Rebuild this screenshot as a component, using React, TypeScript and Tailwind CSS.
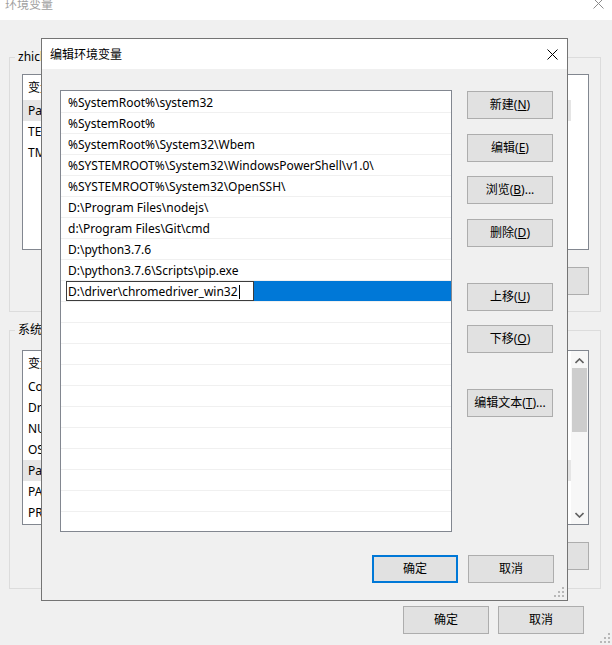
import React from 'react';
import clsx from 'clsx';

const paths = [
  '%SystemRoot%\\system32',
  '%SystemRoot%',
  '%SystemRoot%\\System32\\Wbem',
  '%SYSTEMROOT%\\System32\\WindowsPowerShell\\v1.0\\',
  '%SYSTEMROOT%\\System32\\OpenSSH\\',
  'D:\\Program Files\\nodejs\\',
  'd:\\Program Files\\Git\\cmd',
  'D:\\python3.7.6',
  'D:\\python3.7.6\\Scripts\\pip.exe',
];

const userVars = [
  { name: 'Path', value: 'C:\\Users\\zhichao\\AppData\\Local\\Microsoft\\WindowsApps;', selected: true },
  { name: 'TEMP', value: '%USERPROFILE%\\AppData\\Local\\Temp' },
  { name: 'TMP', value: '%USERPROFILE%\\AppData\\Local\\Temp' },
];

const sysVars = [
  { name: 'ComSpec', value: 'C:\\Windows\\system32\\cmd.exe' },
  { name: 'DriverData', value: 'C:\\Windows\\System32\\Drivers\\DriverData' },
  { name: 'NUMBER_OF_PROCESSORS', value: '8' },
  { name: 'OS', value: 'Windows_NT' },
  { name: 'Path', value: 'C:\\Windows\\system32;C:\\Windows;', selected: true },
  { name: 'PATHEXT', value: '.COM;.EXE;.BAT;.CMD;.VBS;.VBE;.JS;.JSE;.WSF;.WSH;.MSC' },
  { name: 'PROCESSOR_ARCHITECTURE', value: 'AMD64' },
];

type BtnProps = {
  children: React.ReactNode;
  focus?: boolean;
  className?: string;
};

const Btn: React.FC<BtnProps> = ({ children, focus = false, className }) => (
  <div
    className={clsx(
      'w-[86px] h-[28px] shrink-0 flex items-center justify-center bg-[#e1e1e1] text-[12px] text-black',
      focus ? 'border-2 border-[#0078d7]' : 'border border-[#adadad]',
      className
    )}
  >
    {children}
  </div>
);

const Grip = () => (
  <svg width="10" height="10" viewBox="0 0 10 10">
    <rect x="8" y="0" width="2" height="2" fill="#b8b8b8" />
    <rect x="4" y="4" width="2" height="2" fill="#b8b8b8" />
    <rect x="8" y="4" width="2" height="2" fill="#b8b8b8" />
    <rect x="0" y="8" width="2" height="2" fill="#b8b8b8" />
    <rect x="4" y="8" width="2" height="2" fill="#b8b8b8" />
    <rect x="8" y="8" width="2" height="2" fill="#b8b8b8" />
  </svg>
);

const CloseX = ({ color }: { color: string }) => (
  <svg width="11" height="11" viewBox="0 0 11 11">
    <path d="M0.5 0.5 L10.5 10.5 M10.5 0.5 L0.5 10.5" stroke={color} strokeWidth="1" />
  </svg>
);

const VarList: React.FC<{ rows: { name: string; value: string; selected?: boolean }[]; scroll?: boolean; className: string }> = ({
  rows,
  scroll,
  className,
}) => (
  <div className={clsx('relative border border-[#828790] bg-white overflow-hidden', className)}>
    <div className="flex h-[25px] items-center">
      <div className="w-[180px] pl-[5px]">变量</div>
      <div className="pl-[5px]">值</div>
    </div>
    {rows.map((r) => (
      <div key={r.name} className={clsx('flex h-[21px] items-center w-[548px]', r.selected && 'bg-[#e5e5e5]')}>
        <div className="w-[180px] pl-[5px] truncate">{r.name}</div>
        <div className="pl-[5px] truncate">{r.value}</div>
      </div>
    ))}
    {scroll && (
      <div className="absolute right-0 top-0 bottom-0 w-[17px] bg-[#f7f7f7] flex flex-col items-center">
        <svg width="9" height="6" viewBox="0 0 9 6" className="mt-[7px]">
          <path d="M0.5 5 L4.5 1 L8.5 5" stroke="#606060" strokeWidth="1.6" fill="none" />
        </svg>
        <div className="mt-[4px] w-[15px] h-[64px] bg-[#cdcdcd]" />
        <div className="flex-1" />
        <svg width="9" height="6" viewBox="0 0 9 6" className="mb-[6px]">
          <path d="M0.5 1 L4.5 5 L8.5 1" stroke="#606060" strokeWidth="1.6" fill="none" />
        </svg>
      </div>
    )}
  </div>
);

const EditDialog = () => (
  <div className="absolute left-[41px] top-[38px] w-[527px] h-[563px] border border-[#747474] bg-[#f0f0f0] flex flex-col">
    <div className="h-[30px] bg-white flex items-center justify-between pl-[8px] pr-[9px]">
      <span className="pt-[1px] text-[12px] text-black">编辑环境变量</span>
      <CloseX color="#000" />
    </div>
    <div className="flex pl-[18px] pr-[13px] pt-[21px]">
      <div className="w-[392px] h-[442px] border border-[#828790] bg-white overflow-hidden pt-[1px]">
        {paths.map((p) => (
          <div key={p} className="h-[21px] border-b border-[#f0f0f0] flex items-center pl-[7px] pt-[2px]">
            {p}
          </div>
        ))}
        <div className="h-[21px] border-b border-[#f0f0f0] flex">
          <div className="ml-[5px] w-[188px] h-[20px] border border-[#3c3c3c] bg-white flex items-center pl-[1px] pt-[1px]">
            <span>D:\driver\chromedriver_win32</span>
            <span className="ml-[1px] w-px h-[14px] bg-black" />
          </div>
          <div className="flex-1 h-[20px] bg-[#0078d7]" />
        </div>
        {Array.from({ length: 12 }).map((_, i) => (
          <div key={i} className="h-[21px] border-b border-[#f0f0f0]" />
        ))}
      </div>
      <div className="ml-[15px] pt-[1px] flex flex-col">
        <Btn>
          新建(<u>N</u>)
        </Btn>
        <Btn className="mt-[15px]">
          编辑(<u>E</u>)
        </Btn>
        <Btn className="mt-[14px]">
          浏览(<u>B</u>)...
        </Btn>
        <Btn className="mt-[15px]">
          删除(<u>D</u>)
        </Btn>
        <Btn className="mt-[36px]">
          上移(<u>U</u>)
        </Btn>
        <Btn className="mt-[14px]">
          下移(<u>O</u>)
        </Btn>
        <Btn className="mt-[36px]">
          编辑文本(<u>T</u>)...
        </Btn>
      </div>
    </div>
    <div className="flex justify-end gap-[10px] pr-[13px] mt-[23px]">
      <Btn focus>确定</Btn>
      <Btn>取消</Btn>
    </div>
    <div className="flex-1 flex items-end justify-end pr-[3px] pb-[3px]">
      <Grip />
    </div>
  </div>
);

export default function App() {
  return (
    <div className="relative w-[612px] h-[645px] overflow-hidden bg-[#f0f0f0] text-[12px] text-black font-['Noto_Sans','Noto_Sans_CJK_SC',sans-serif]">
      <div className="h-[20px] bg-white flex items-start justify-between">
        <span className="pl-[5px] -mt-[4px] text-[#a0a0a0] text-[12px]">环境变量</span>
        <div className="-mt-[2px] mr-[8px]">
          <CloseX color="#8a8a8a" />
        </div>
      </div>
      <div className="pl-[9px] pr-[11px] pt-[37px]">
        <div className="relative border border-[#dcdcdc] pt-[16px] pl-[12px] pr-[11px] pb-[16px]">
          <span className="absolute -top-[9px] left-[5px] px-[3px] leading-[16px] bg-[#f0f0f0]">zhichao 的用户变量(U)</span>
          <VarList rows={userVars} className="h-[176px]" />
          <div className="flex justify-end gap-[8px] mt-[17px]">
            <Btn className="h-[27px]">新建(N)...</Btn>
            <Btn className="h-[27px]">编辑(E)...</Btn>
            <Btn className="h-[27px]">删除(D)</Btn>
          </div>
        </div>
        <div className="relative mt-[18px] border border-[#dcdcdc] pt-[19px] pl-[12px] pr-[11px] pb-[18px]">
          <span className="absolute -top-[9px] left-[5px] px-[3px] leading-[16px] bg-[#f0f0f0]">系统变量(S)</span>
          <VarList rows={sysVars} scroll className="h-[175px]" />
          <div className="flex justify-end gap-[8px] mt-[17px]">
            <Btn className="h-[27px]">新建(W)...</Btn>
            <Btn className="h-[27px]">编辑(I)...</Btn>
            <Btn className="h-[27px]">删除(L)</Btn>
          </div>
        </div>
        <div className="flex justify-end gap-[9px] mt-[17px] pr-[17px]">
          <Btn className="h-[27px]">确定</Btn>
          <Btn className="h-[27px]">取消</Btn>
        </div>
      </div>
      <div className="absolute right-[2px] bottom-[2px]">
        <Grip />
      </div>
      <EditDialog />
    </div>
  );
}
